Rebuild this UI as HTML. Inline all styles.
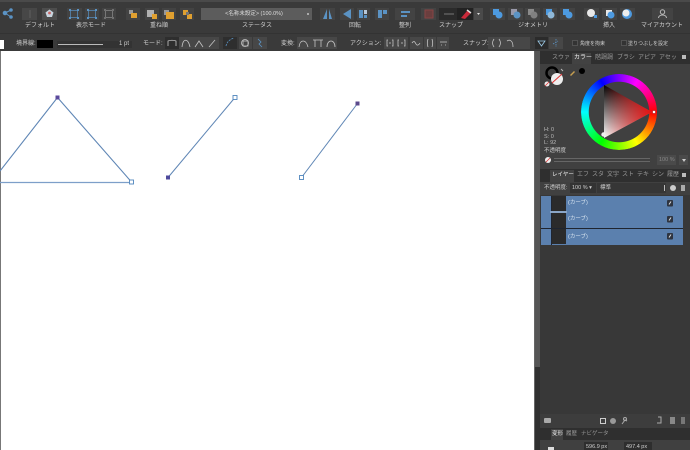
<!DOCTYPE html>
<html><head><meta charset="utf-8"><style>
html,body{margin:0;padding:0;width:690px;height:450px;overflow:hidden;background:#3a3a3a}
body{position:relative;font-family:"Liberation Sans","Noto Sans CJK JP",sans-serif;color:#d0d0d0}
#w{position:absolute;left:0;top:0;width:690px;height:450px;overflow:hidden;filter:blur(.35px);background:#3a3a3a}
.a{position:absolute}
.t{position:absolute;font-size:6px;line-height:8px;white-space:nowrap;color:#cfcfcf}
.c{transform:translateX(-50%)}
.tab{position:absolute;font-size:6px;line-height:8px;color:#999;white-space:nowrap}
</style></head><body><div id="w">
<div class="a" style="left:0;top:0;width:690px;height:2px;background:#4a4a4a"></div>
<div class="a" style="left:0;top:33px;width:690px;height:1px;background:#333"></div>

<!-- top row buttons -->
<svg class="a" style="left:0;top:0" width="690" height="34" viewBox="0 0 690 34">
<g fill="#5b93c4" stroke="#5b93c4"><circle cx="5" cy="13" r="1.800"/><circle cx="11" cy="10" r="1.300"/><circle cx="11" cy="17" r="1.300"/><path d="M5 13L11 10M5 13L11 17" fill="none"/></g>
<rect x="22" y="8" width="15" height="12" fill="#474747"/><rect x="42" y="8" width="15" height="12" fill="#4d4d4d"/>
<path d="M30 10v8" stroke="#5f5f5f"/><path d="M49.500 9.500l4 3-1.500 4.500h-5l-1.500-4.500z" fill="#c8d4de"/><circle cx="49.500" cy="13" r="1.400" fill="#c66"/>
<rect x="67" y="8" width="15" height="12" fill="#434343"/><rect x="85" y="8" width="14" height="12" fill="#434343"/><rect x="102" y="8" width="14" height="12" fill="#434343"/>
<g fill="none" stroke="#527a9e"><rect x="70.500" y="10.500" width="7" height="7"/><rect x="88.500" y="10.500" width="7" height="7"/></g>
<rect x="105.500" y="10.500" width="7" height="7" fill="none" stroke="#777"/>
<g fill="#5b93c4"><rect x="69" y="9" width="2" height="2"/><rect x="77" y="9" width="2" height="2"/><rect x="69" y="17" width="2" height="2"/><rect x="77" y="17" width="2" height="2"/><rect x="87" y="9" width="2" height="2"/><rect x="95" y="9" width="2" height="2"/><rect x="87" y="17" width="2" height="2"/><rect x="95" y="17" width="2" height="2"/></g>
<g fill="#707070"><rect x="104" y="9" width="2" height="2"/><rect x="112" y="9" width="2" height="2"/><rect x="104" y="17" width="2" height="2"/><rect x="112" y="17" width="2" height="2"/></g>
<!-- stack icons -->
<rect x="126" y="8" width="14" height="12" fill="#434343"/><rect x="145" y="8" width="14" height="12" fill="#434343"/><rect x="162" y="8" width="14" height="12" fill="#434343"/><rect x="180" y="8" width="14" height="12" fill="#434343"/>
<rect x="129" y="10" width="4" height="4" fill="#999"/><rect x="131" y="13" width="6" height="5" fill="#e0a030"/>
<rect x="147" y="10" width="7" height="7" fill="#b0b0b0"/><rect x="152" y="14" width="5" height="5" fill="#e0a030"/>
<rect x="164" y="10" width="5" height="5" fill="#999"/><rect x="166" y="12" width="8" height="7" fill="#e0a030"/>
<rect x="183" y="10" width="5" height="5" fill="#e0a030"/><rect x="187" y="14" width="5" height="5" fill="#e0a030"/><rect x="186" y="12" width="3" height="3" fill="#777"/>
<!-- flip / rotate -->
<rect x="320" y="8" width="15" height="12" fill="#434343"/><rect x="340" y="8" width="14" height="12" fill="#434343"/><rect x="357" y="8" width="13" height="12" fill="#434343"/><rect x="375" y="8" width="14" height="12" fill="#434343"/>
<path d="M327 9v10h-4zM329 9v10h3z" fill="#5b93c4"/>
<path d="M351 9v10l-8-5z" fill="#5b93c4"/>
<rect x="359" y="10" width="4" height="8" fill="#5b93c4"/><path d="M364 10h3v4h-3z" fill="#b8c8d8"/><rect x="364" y="15" width="3" height="3" fill="#5b93c4"/>
<rect x="378" y="10" width="4" height="8" fill="#5b93c4"/><rect x="383" y="10" width="4" height="4" fill="#5b93c4"/>
<!-- order -->
<rect x="395" y="8" width="20" height="12" fill="#434343"/><path d="M401 11h9v2h-9zM401 15h6v2h-6z" fill="#5b93c4"/>
<!-- snap -->
<rect x="421" y="8" width="15" height="12" fill="#434343"/><rect x="425" y="10" width="8" height="8" fill="#6a3e3e" stroke="#844"/>
<rect x="439" y="8" width="18" height="12" fill="#2b2b2b"/><path d="M444 14h10" stroke="#777"/>
<rect x="457" y="8" width="16" height="12" fill="#222"/><path d="M461 18l6-7 4 2-6 6z" fill="#c92a3a"/><path d="M467 10l4 3" stroke="#ddd" stroke-width="1.500" fill="none"/>
<rect x="474" y="8" width="9" height="12" fill="#4a4a4a"/><path d="M477 13h3l-1.500 2z" fill="#ddd"/>
<!-- geometry -->
<g><rect x="490" y="8" width="15" height="12" fill="#434343"/><rect x="508" y="8" width="15" height="12" fill="#434343"/><rect x="525" y="8" width="15" height="12" fill="#434343"/><rect x="543" y="8" width="14" height="12" fill="#434343"/><rect x="560" y="8" width="15" height="12" fill="#434343"/>
<rect x="493" y="9" width="6" height="6" fill="#4d9ae0"/><circle cx="499" cy="15" r="3.500" fill="#4d9ae0"/>
<rect x="511" y="9" width="6" height="6" fill="#99a"/><circle cx="517" cy="15" r="3.500" fill="#5b93c4"/>
<rect x="528" y="9" width="6" height="6" fill="#8a8a8a"/><circle cx="534" cy="15" r="3.500" fill="#808080"/>
<rect x="546" y="9" width="6" height="6" fill="#4d9ae0"/><circle cx="551" cy="15" r="3.500" fill="#8fb8d8"/>
<rect x="563" y="9" width="6" height="6" fill="#4d9ae0"/><circle cx="569" cy="15" r="3.500" fill="#4d9ae0"/></g>
<!-- insert -->
<rect x="584" y="8" width="15" height="12" fill="#434343"/><rect x="602" y="8" width="15" height="12" fill="#434343"/><rect x="620" y="8" width="15" height="12" fill="#434343"/>
<circle cx="591" cy="13" r="4" fill="#e8e8e8"/><rect x="594" y="15" width="3" height="3" fill="#4d9ae0"/>
<rect x="606" y="10" width="6" height="6" fill="#e8e8e8"/><circle cx="611" cy="15" r="3.500" fill="#4d9ae0"/>
<circle cx="627" cy="14" r="5" fill="#4d9ae0"/><circle cx="626" cy="13" r="3.500" fill="#eee"/>
<!-- account -->
<rect x="652" y="8" width="21" height="12" fill="#434343"/><circle cx="662.500" cy="12" r="2.200" fill="none" stroke="#bbb"/><path d="M658.500 18c0-4 8-4 8 0" fill="none" stroke="#bbb"/>
</svg>
<div class="a" style="left:201px;top:8px;width:111px;height:12px;background:#5c5c5c"></div>
<div class="t c" style="left:254px;top:10px;font-size:5.500px;color:#ddd">&lt;名称未設定&gt; (100.0%)</div>
<div class="a" style="left:307px;top:13px;width:2px;height:2px;background:#aaa"></div>

<div class="t c" style="left:40px;top:22px">デフォルト</div>
<div class="t c" style="left:91px;top:22px">表示モード</div>
<div class="t c" style="left:159px;top:22px">重ね順</div>
<div class="t c" style="left:257px;top:22px">ステータス</div>
<div class="t c" style="left:355px;top:22px">回転</div>
<div class="t c" style="left:405px;top:22px">整列</div>
<div class="t c" style="left:451px;top:22px">スナップ</div>
<div class="t c" style="left:533px;top:22px">ジオメトリ</div>
<div class="t c" style="left:609px;top:22px">挿入</div>
<div class="t c" style="left:662px;top:22px">マイアカウント</div>

<!-- context row -->
<div class="a" style="left:0;top:40px;width:4px;height:9px;background:#fff"></div>
<div class="t" style="left:16px;top:40px">境界線:</div>
<div class="a" style="left:37px;top:40px;width:16px;height:8px;background:#000"></div>
<div class="a" style="left:57px;top:41px;width:75px;height:7px;background:#333"></div>
<div class="a" style="left:58px;top:44px;width:45px;height:1px;background:#bbb"></div>
<div class="t" style="left:119px;top:40px">1 pt</div>
<div class="t" style="left:143px;top:40px">モード:</div>
<svg class="a" style="left:0;top:34px" width="690" height="17" viewBox="0 0 690 17">
<g fill="none" stroke="#c4c4c4" stroke-width=".8">
<rect x="165" y="3" width="14" height="12" fill="#2e2e2e" stroke="none"/><path d="M168 12V7c2-1 6-1 8 0v5"/>
<rect x="179" y="3" width="14" height="12" fill="#474747" stroke="none"/><path d="M182 13c1-9 6-9 8 0"/>
<rect x="193" y="3" width="13" height="12" fill="#474747" stroke="none"/><path d="M195 13l4-6 4 6"/>
<rect x="206" y="3" width="13" height="12" fill="#474747" stroke="none"/><path d="M209 13l6-7"/>
<rect x="223" y="3" width="14" height="12" fill="#2e2e2e" stroke="none"/><path d="M226 12c1-5 5-7 8-8" stroke="#5b93c4" stroke-dasharray="2 1"/>
<rect x="239" y="3" width="13" height="12" fill="#474747" stroke="none"/><circle cx="245" cy="9" r="3.500"/><rect x="243" y="7" width="5" height="5"/>
<rect x="253" y="3" width="14" height="12" fill="#474747" stroke="none"/><path d="M258 5l3 3-2 2 3 3" stroke="#5b93c4"/>
<rect x="297" y="3" width="14" height="12" fill="#474747" stroke="none"/><path d="M299 13c1-8 7-8 9 0"/>
<rect x="311" y="3" width="14" height="12" fill="#474747" stroke="none"/><path d="M313 6h10M315 6v7M321 6v7"/>
<rect x="325" y="3" width="12" height="12" fill="#474747" stroke="none"/><path d="M327 13c0-8 8-8 8 0"/>
<rect x="384" y="3" width="12" height="12" fill="#474747" stroke="none"/><path d="M388 6h-1v6h1M392 6h1v6h-1M390 8v2"/>
<rect x="396" y="3" width="12" height="12" fill="#474747" stroke="none"/><path d="M399 6h-1v6h1M404 6h1v6h-1M402 8v2"/>
<rect x="410" y="3" width="13" height="12" fill="#474747" stroke="none"/><path d="M412 9c2-3 3-1 4 1s3 1 4-1"/>
<rect x="424" y="3" width="12" height="12" fill="#474747" stroke="none"/><path d="M428 5c-1 3-1 5 0 8M432 5c1 3 1 5 0 8"/>
<rect x="437" y="3" width="12" height="12" fill="#474747" stroke="none"/><path d="M440 8h7M441 11h1M445 11h1"/>
<rect x="488" y="3" width="42" height="12" fill="#474747" stroke="none"/><path d="M494 5c-2 3-2 5 0 8M499 5c2 3 2 5 0 8M507 7c3-2 6 0 6 6"/>
<rect x="535" y="3" width="13" height="12" fill="#2b2b2b" stroke="none"/><path d="M538 7h7l-3.500 5z" stroke="#9ccbe8"/>
<rect x="549" y="3" width="14" height="12" fill="#474747" stroke="none"/><path d="M556 5v8M553 10l5-3" stroke="#5b93c4" stroke-dasharray="1.500 1"/>
<rect x="572.500" y="6.500" width="5" height="5" stroke="#5a5a5a" fill="#333"/><rect x="621.500" y="6.500" width="5" height="5" stroke="#5a5a5a" fill="#333"/>
</g></svg>
<div class="t" style="left:281px;top:40px">変換:</div>
<div class="t" style="left:350px;top:40px">アクション:</div>
<div class="t" style="left:463px;top:40px">スナップ:</div>
<div class="t" style="left:580px;top:40px;font-size:5px">角度を拘束</div>
<div class="t" style="left:628px;top:40px;font-size:5px">塗りつぶしを設定</div>

<!-- canvas -->
<div class="a" style="left:0;top:51px;width:534px;height:399px;background:#fff"></div>
<div class="a" style="left:0;top:51px;width:1px;height:399px;background:#777"></div>
<svg class="a" style="left:0;top:51px" width="534" height="399" viewBox="0 51 534 399">
<g fill="none" stroke="#5f86b5" stroke-width="1">
<path d="M0 171L57.500 97.500L131.500 182" stroke-width="1.100"/>
<path d="M0 182.500L131 182.500" stroke="#7d9fc9" stroke-width="1.300"/>
<path d="M168 177.500L235 97.500"/>
<path d="M301.500 177.500L357.500 103.500"/></g>
<rect x="55.500" y="95.500" width="4" height="4" fill="#5b4a9c"/>
<rect x="129.500" y="180" width="4" height="4" fill="#fff" stroke="#4f86bd" stroke-width=".9"/>
<rect x="166" y="175.500" width="4" height="4" fill="#4e4a9c"/>
<rect x="233" y="95.500" width="4" height="4" fill="#fff" stroke="#4f86bd" stroke-width=".9"/>
<rect x="355.500" y="101.500" width="4" height="4" fill="#5b4a8c"/>
<rect x="299.500" y="175.500" width="4" height="4" fill="#fff" stroke="#4f86bd" stroke-width=".9"/>
</svg>

<!-- right panels -->
<div class="a" style="left:534px;top:51px;width:156px;height:399px;background:#383838"></div>
<div class="a" style="left:534px;top:51px;width:1px;height:399px;background:#666"></div>
<div class="a" style="left:535px;top:51px;width:5px;height:316px;background:#555"></div>
<div class="a" style="left:535px;top:367px;width:5px;height:83px;background:#303030"></div>
<div class="a" style="left:540px;top:51px;width:150px;height:13px;background:#2f2f2f"></div>
<div class="a" style="left:572px;top:53px;width:19px;height:11px;background:#424242"></div>
<div class="tab" style="left:552px;top:54px">スウァ</div>
<div class="tab" style="left:574px;top:54px;color:#eee">カラー</div>
<div class="tab" style="left:595px;top:54px">階調調</div>
<div class="tab" style="left:617px;top:54px">ブラシ</div>
<div class="tab" style="left:638px;top:54px">アピア</div>
<div class="tab" style="left:659px;top:54px">アセッ</div>
<div class="a" style="left:682px;top:55px;width:4px;height:4px;background:#bbb"></div>

<!-- colour -->
<div class="a" style="left:540px;top:64px;width:150px;height:105px;background:#404040"></div>
<div class="a" style="left:581px;top:74px;width:76px;height:76px;border-radius:50%;background:conic-gradient(from 90deg,#f00,#ff0 60deg,#0f0 120deg,#0ff 180deg,#00f 240deg,#f0f 300deg,#f00);-webkit-mask:radial-gradient(circle,transparent 30px,#000 30.500px);mask:radial-gradient(circle,transparent 30px,#000 30.500px)"></div>
<svg class="a" style="left:540px;top:64px" width="150" height="105" viewBox="540 64 150 105">
<defs>
<linearGradient id="g1" gradientUnits="userSpaceOnUse" x1="652" y1="112" x2="604" y2="112"><stop offset="0" stop-color="#e81010"/><stop offset="1" stop-color="#e81010" stop-opacity="0"/></linearGradient>
<linearGradient id="g2" gradientUnits="userSpaceOnUse" x1="604" y1="85" x2="604" y2="138"><stop offset="0" stop-color="#000"/><stop offset="1" stop-color="#fff"/></linearGradient>
</defs>
<circle cx="552" cy="73" r="5.500" fill="none" stroke="#000" stroke-width="2.500"/>
<circle cx="557" cy="79" r="6" fill="#eee"/><path d="M552 83l10-9" stroke="#d33" stroke-width="1"/>
<circle cx="547" cy="84" r="2.500" fill="#eee"/><path d="M545 86l4-4" stroke="#d33" stroke-width=".8"/>
<path d="M561 69l2 2" stroke="#bbb"/>
<path d="M570 75l4-4 1 1-4 4z" fill="#c8a050"/><circle cx="582" cy="71" r="3" fill="#000"/>
<path d="M604 85V138L652 112Z" fill="url(#g2)"/>
<path d="M604 85V138L652 112Z" fill="url(#g1)"/>
<circle cx="603.500" cy="134.500" r="2.200" fill="#eee"/>
<rect x="652.500" y="110.500" width="3" height="3" fill="#fff" stroke="#c22" stroke-width=".8"/>
<circle cx="548" cy="160" r="3" fill="#eee"/><path d="M546 162l4-4" stroke="#d33" stroke-width=".8"/>
<path d="M554 158.500h96M554 161.500h96" stroke="#666"/>
<rect x="657" y="155" width="19" height="10" fill="#4a4a4a"/><rect x="679" y="155" width="9" height="10" fill="#4a4a4a"/><path d="M682 159h4l-2 3z" fill="#ccc"/>
</svg>
<div class="t" style="left:544px;top:127px;font-size:5.500px;line-height:6.500px;color:#bbb">H: 0<br>S: 0<br>L: 92</div>
<div class="t" style="left:544px;top:147px;font-size:5.500px">不透明度</div>
<div class="t" style="left:659px;top:156px;font-size:5.500px;color:#888">100 %</div>

<!-- layers tabs -->
<div class="a" style="left:540px;top:169px;width:150px;height:13px;background:#2f2f2f"></div>
<div class="a" style="left:550px;top:170px;width:24px;height:12px;background:#424242"></div>
<div class="tab" style="left:552px;top:171px;color:#eee;font-size:5.500px">レイヤー</div>
<div class="tab" style="left:577px;top:171px">エフ</div>
<div class="tab" style="left:592px;top:171px">スタ</div>
<div class="tab" style="left:607px;top:171px">文字</div>
<div class="tab" style="left:622px;top:171px">スト</div>
<div class="tab" style="left:637px;top:171px">テキ</div>
<div class="tab" style="left:652px;top:171px">シン</div>
<div class="tab" style="left:667px;top:171px">履歴</div>
<div class="a" style="left:682px;top:173px;width:4px;height:4px;background:#bbb"></div>

<div class="a" style="left:540px;top:182px;width:150px;height:13px;background:#404040"></div>
<div class="t" style="left:544px;top:184px;font-size:5.500px">不透明度:</div>
<div class="a" style="left:570px;top:183px;width:26px;height:10px;background:#333"></div>
<div class="t" style="left:572px;top:184px;font-size:5.500px">100 % ▾</div>
<div class="a" style="left:597px;top:183px;width:69px;height:10px;background:#363636"></div>
<div class="t" style="left:600px;top:184px;font-size:5.500px">標準</div>
<div class="a" style="left:664px;top:185px;width:1px;height:6px;background:#bbb"></div>
<div class="a" style="left:670px;top:185px;width:6px;height:6px;border-radius:50%;background:#ccc"></div>
<div class="a" style="left:681px;top:185px;width:4px;height:6px;background:#aaa"></div>

<!-- layers -->
<div class="a" style="left:540px;top:195px;width:150px;height:229px;background:#383838"></div>
<div class="a" style="left:541px;top:196px;width:142px;height:49px;background:#5b80ae"></div>
<div class="a" style="left:541px;top:228px;width:142px;height:1px;background:#1f2530"></div>
<div class="a" style="left:551px;top:196px;width:1px;height:49px;background:#1f2530"></div>
<div class="a" style="left:552px;top:196px;width:14px;height:15px;background:#2b2b2b"></div>
<div class="a" style="left:552px;top:213px;width:14px;height:15px;background:#2b2b2b"></div>
<div class="a" style="left:552px;top:229px;width:14px;height:15px;background:#2b2b2b"></div>
<div class="a" style="left:550px;top:211px;width:17px;height:2px;background:#8aa6c8"></div>
<div class="t" style="left:568px;top:199px;color:#d8e4f0;font-size:5.500px">(カーブ)</div>
<div class="t" style="left:568px;top:215px;color:#d8e4f0;font-size:5.500px">(カーブ)</div>
<div class="t" style="left:568px;top:233px;color:#d8e4f0;font-size:5.500px">(カーブ)</div>
<svg class="a" style="left:666px;top:199px" width="10" height="44" viewBox="0 0 10 44">
<g><rect x="1" y="1" width="6" height="6.500" rx="1" fill="#2e3440"/><rect x="1" y="17" width="6" height="6.500" rx="1" fill="#2e3440"/><rect x="1" y="34" width="6" height="6.500" rx="1" fill="#2e3440"/>
<path d="M3 5.500l2-3M3 21.500l2-3M3 38.500l2-3" stroke="#ddd"/></g></svg>

<!-- layer footer -->
<div class="a" style="left:540px;top:414px;width:150px;height:14px;background:#3d3d3d"></div>
<svg class="a" style="left:540px;top:414px" width="150" height="14" viewBox="540 414 150 14">
<rect x="544" y="418" width="7" height="5" rx="1" fill="#aaa"/>
<rect x="600.500" y="418.500" width="5" height="5" fill="none" stroke="#ccc"/>
<circle cx="613" cy="421" r="3" fill="#999"/><path d="M622 424l3-4 2 1" fill="none" stroke="#aaa"/><circle cx="625" cy="419" r="1.500" fill="none" stroke="#aaa"/>
<path d="M658 417h3v6h-4" fill="none" stroke="#aaa"/><rect x="670" y="417" width="5" height="7" fill="#888"/><rect x="681" y="417" width="4" height="7" fill="#777"/>
</svg>
<div class="a" style="left:540px;top:428px;width:150px;height:12px;background:#2f2f2f"></div>
<div class="a" style="left:551px;top:429px;width:12px;height:11px;background:#424242"></div>
<div class="tab" style="left:552px;top:430px;color:#eee;font-size:5.500px">変形</div>
<div class="tab" style="left:566px;top:430px;font-size:5.500px">履歴</div>
<div class="tab" style="left:581px;top:430px;font-size:5.500px">ナビゲータ</div>
<div class="a" style="left:540px;top:440px;width:150px;height:10px;background:#404040"></div>
<div class="a" style="left:548px;top:447px;width:6px;height:3px;background:#ddd"></div>
<div class="a" style="left:584px;top:442px;width:24px;height:8px;background:#2e2e2e"></div>
<div class="a" style="left:624px;top:442px;width:28px;height:8px;background:#2e2e2e"></div>
<div class="t" style="left:586px;top:443px;font-size:5.500px">596.9 px</div>
<div class="t" style="left:626px;top:443px;font-size:5.500px">497.4 px</div>
</div></body></html>
